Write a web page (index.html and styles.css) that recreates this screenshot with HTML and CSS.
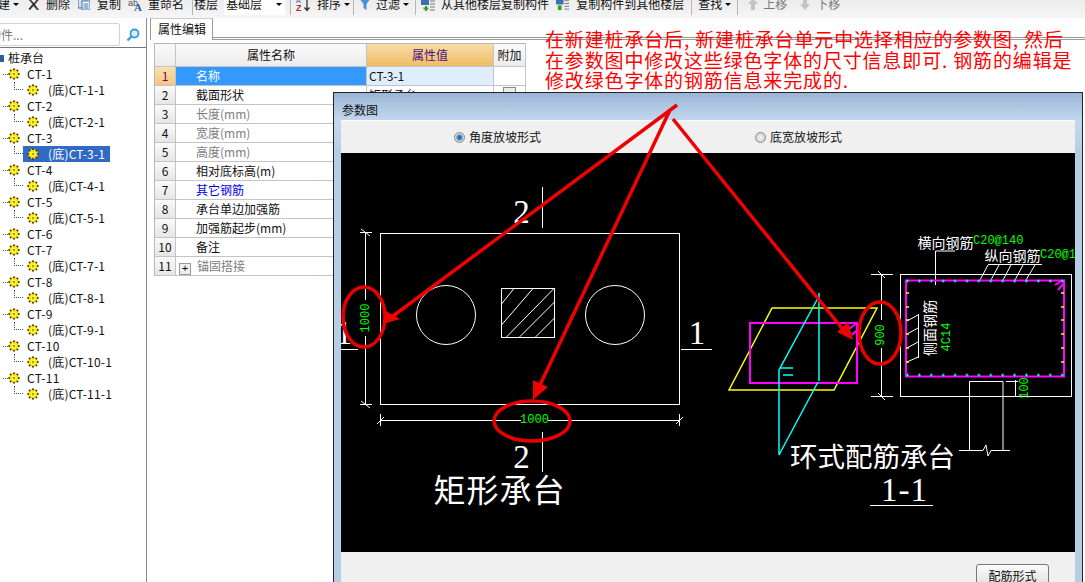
FILE: index.html
```html
<!DOCTYPE html>
<html lang="zh-CN">
<head>
<meta charset="utf-8">
<title>属性编辑</title>
<link rel="stylesheet" href="styles.css">
</head>
<body>
<svg class="defs" width="0" height="0" aria-hidden="true">
  <symbol id="sun" viewBox="0 0 12 12">
    <circle cx="6" cy="6" r="5" fill="#ffe600"/>
    <g fill="#3a3a20">
      <circle cx="6" cy="1.2" r="1"/><circle cx="6" cy="10.8" r="1"/><circle cx="1.2" cy="6" r="1"/><circle cx="10.8" cy="6" r="1"/>
      <circle cx="2.6" cy="2.6" r="1"/><circle cx="9.4" cy="2.6" r="1"/><circle cx="2.6" cy="9.4" r="1"/><circle cx="9.4" cy="9.4" r="1"/>
    </g>
    <circle cx="6" cy="6" r="2.6" fill="#fff34d"/>
    <circle cx="6" cy="6" r="1" fill="#8a7a20"/>
  </symbol>
</svg>

<header class="toolbar">
  <div class="toolrow">
    <span class="tool first">建<i class="caret"></i></span>
    <span class="tool ml9 g6"><svg class="ic12" viewBox="0 0 12 12"><path d="M1 0l5 5 4-5 1.500 1L7 6.500 11 12 9 12 5.500 8 2 12 .5 11 4.500 6 0 1z" fill="#333"/></svg>删除</span>
    <span class="tool ml8 g7"><svg class="ic12" viewBox="0 0 12 12"><rect x="0" y="0" width="8" height="10" fill="#cfe0f5" stroke="#3d6fa8"/><rect x="4" y="3" width="8" height="9" fill="#fff" stroke="#3d6fa8"/><path d="M5.500 6h5M5.500 8h5M5.500 10h5" stroke="#3d6fa8"/></svg>复制</span>
    <span class="tool ml7 g5"><svg class="ic15" viewBox="0 0 15 15"><text x="0" y="9" class="ic-ab">ab</text><text x="6" y="14" class="ic-a">A</text></svg>重命名</span>
    <i class="sep ml8"></i>
    <span class="tool ml1">楼层</span>
    <span class="select ml6">基础层<i class="caret"></i></span>
    <i class="sep ml5"></i>
    <span class="tool ml5 g6"><svg class="ic15" viewBox="0 0 15 15"><text x="0" y="6" class="ic-s">A</text><text x="0" y="14" class="ic-z">Z</text><path d="M11 1v12M8.500 10.500L11 13.500l2.500-3" stroke="#333" fill="none" stroke-width="1.300"/></svg>排序<i class="caret"></i></span>
    <i class="sep ml3"></i>
    <span class="tool ml5 g5"><svg class="ic12" viewBox="0 0 12 12"><path d="M0 0h12L7.500 6v6L4.500 10V6z" fill="#4a90d9"/></svg>过滤<i class="caret"></i></span>
    <i class="sep ml6"></i>
    <span class="tool ml5 g5"><svg class="ic15" viewBox="0 0 15 15"><rect x="0" y="0" width="8" height="8" fill="#3d6fa8"/><path d="M9 1h5M9 4h5M9 7h5M9 10h5M9 13h5" stroke="#777"/><path d="M5 9v5M2.500 11.500h5" stroke="#2da52d" stroke-width="2"/></svg>从其他楼层复制构件</span>
    <span class="tool ml7 g6"><svg class="ic14" viewBox="0 0 15 15"><rect x="0" y="0" width="8" height="8" fill="#3d6fa8"/><path d="M9 1h5M9 4h5M9 7h5M9 10h5M9 13h5" stroke="#777"/><path d="M2 9h4v5H2z" fill="#2da52d"/></svg>复制构件到其他楼层</span>
    <i class="sep ml7"></i>
    <span class="tool ml6 g5">查找<i class="caret"></i></span>
    <i class="sep ml6"></i>
    <span class="tool ml9 g4 dim"><svg class="ic12" viewBox="0 0 12 12"><path d="M6 0l5 6H8v6H4V6H1z" fill="#c4c4c4"/></svg>上移</span>
    <span class="tool ml12 g5 dim"><svg class="ic12" viewBox="0 0 12 12"><path d="M6 12l5-6H8V0H4v6H1z" fill="#c4c4c4"/></svg>下移</span>
  </div>
</header>

<main class="workspace">
  <aside class="sidebar">
    <div class="search">
      <div class="search-box">构件...</div>
      <svg class="search-ic" viewBox="0 0 14 14"><circle cx="8.500" cy="5.500" r="4" fill="#d9effb" stroke="#3a9bd8" stroke-width="1.800"/><path d="M5.500 8.500L1.500 12.500" stroke="#3a9bd8" stroke-width="2.400"/></svg>
    </div>
    <ul class="tree">
      <li class="row root"><i class="cube"></i><span>桩承台</span></li>
      <li class="row p"><i class="dot"></i><svg class="sun"><use href="#sun"/></svg><span>CT-1</span></li>
      <li class="row c"><i class="elbow"></i><span class="node"><svg class="sun"><use href="#sun"/></svg><span>(底)CT-1-1</span></span></li>
      <li class="row p"><i class="dot"></i><svg class="sun"><use href="#sun"/></svg><span>CT-2</span></li>
      <li class="row c"><i class="elbow"></i><span class="node"><svg class="sun"><use href="#sun"/></svg><span>(底)CT-2-1</span></span></li>
      <li class="row p"><i class="dot"></i><svg class="sun"><use href="#sun"/></svg><span>CT-3</span></li>
      <li class="row c"><i class="elbow"></i><span class="node selected"><svg class="sun"><use href="#sun"/></svg><span>(底)CT-3-1</span></span></li>
      <li class="row p"><i class="dot"></i><svg class="sun"><use href="#sun"/></svg><span>CT-4</span></li>
      <li class="row c"><i class="elbow"></i><span class="node"><svg class="sun"><use href="#sun"/></svg><span>(底)CT-4-1</span></span></li>
      <li class="row p"><i class="dot"></i><svg class="sun"><use href="#sun"/></svg><span>CT-5</span></li>
      <li class="row c"><i class="elbow"></i><span class="node"><svg class="sun"><use href="#sun"/></svg><span>(底)CT-5-1</span></span></li>
      <li class="row p"><i class="dot"></i><svg class="sun"><use href="#sun"/></svg><span>CT-6</span></li>
      <li class="row p"><i class="dot"></i><svg class="sun"><use href="#sun"/></svg><span>CT-7</span></li>
      <li class="row c"><i class="elbow"></i><span class="node"><svg class="sun"><use href="#sun"/></svg><span>(底)CT-7-1</span></span></li>
      <li class="row p"><i class="dot"></i><svg class="sun"><use href="#sun"/></svg><span>CT-8</span></li>
      <li class="row c"><i class="elbow"></i><span class="node"><svg class="sun"><use href="#sun"/></svg><span>(底)CT-8-1</span></span></li>
      <li class="row p"><i class="dot"></i><svg class="sun"><use href="#sun"/></svg><span>CT-9</span></li>
      <li class="row c"><i class="elbow"></i><span class="node"><svg class="sun"><use href="#sun"/></svg><span>(底)CT-9-1</span></span></li>
      <li class="row p"><i class="dot"></i><svg class="sun"><use href="#sun"/></svg><span>CT-10</span></li>
      <li class="row c"><i class="elbow"></i><span class="node"><svg class="sun"><use href="#sun"/></svg><span>(底)CT-10-1</span></span></li>
      <li class="row p"><i class="dot"></i><svg class="sun"><use href="#sun"/></svg><span>CT-11</span></li>
      <li class="row c"><i class="elbow"></i><span class="node"><svg class="sun"><use href="#sun"/></svg><span>(底)CT-11-1</span></span></li>
    </ul>
  </aside>

  <section class="editor">
    <div class="tabs"><span class="tab">属性编辑</span></div>
    <div class="grid-wrap">
      <table class="props">
        <colgroup><col class="c-n"><col class="c-name"><col class="c-val"><col class="c-add"></colgroup>
        <thead><tr><th class="num"></th><th>属性名称</th><th class="val-h">属性值</th><th>附加</th></tr></thead>
        <tbody>
          <tr><td class="num cur">1</td><td class="name on">名称</td><td class="val on-val">CT-3-1</td><td></td></tr>
          <tr><td class="num">2</td><td class="name">截面形状</td><td class="val">矩形承台</td><td class="chk"><i class="box"></i></td></tr>
          <tr><td class="num">3</td><td class="name gray">长度(mm)</td><td></td><td></td></tr>
          <tr><td class="num">4</td><td class="name gray">宽度(mm)</td><td></td><td></td></tr>
          <tr><td class="num">5</td><td class="name gray">高度(mm)</td><td></td><td></td></tr>
          <tr><td class="num">6</td><td class="name">相对底标高(m)</td><td></td><td></td></tr>
          <tr><td class="num">7</td><td class="name blue">其它钢筋</td><td></td><td></td></tr>
          <tr><td class="num">8</td><td class="name">承台单边加强筋</td><td></td><td></td></tr>
          <tr><td class="num">9</td><td class="name">加强筋起步(mm)</td><td></td><td></td></tr>
          <tr><td class="num">10</td><td class="name">备注</td><td></td><td></td></tr>
          <tr><td class="num">11</td><td class="name gray expand"><i class="plus">+</i>锚固搭接</td><td></td><td></td></tr>
        </tbody>
      </table>
    </div>
  </section>
</main>

<div class="dialog">
  <div class="dlg-title">参数图</div>
  <div class="dlg-body">
    <div class="dlg-options">
      <label class="radio-a"><i class="radio on"></i>角度放坡形式</label>
      <label class="radio-b"><i class="radio"></i>底宽放坡形式</label>
    </div>
    <svg class="drawing" viewBox="341 153 734 399">
      <g class="w" fill="none">
        <rect x="380.500" y="233.500" width="299" height="171"/>
        <circle cx="446" cy="315" r="29.500"/>
        <circle cx="615" cy="315" r="29.500"/>
        <rect x="501.500" y="288.500" width="53" height="49"/>
        <path d="M501.500 304L514 288.500M501.500 325L533 288.500M506 337.500L554 288.500M519 337.500L554.500 302M535 337.500L554.500 318"/>
        <path d="M365.500 232V405M360 232.500H372M360 404.500H372M361 229l9 7M361 401l9 7"/>
        <path d="M380 420.500H680M380.500 414V426M679.500 414V426M377 424l7-7M676 424l7-7"/>
        <path d="M542.500 187V228M542.500 432V472M341 349.500H358M681 349.500H712"/>
        <rect x="900.500" y="274.500" width="171" height="122"/>
        <path d="M881.500 274V396M871 274.500H893M871 396.500H893M878 271l7 7M878 393l7 7"/>
        <path d="M935.500 285V251H955M988 264.500H1042M988 265l-8 15M999 265l-8 15M1011 265l-8 15M1023 265l-8 15M1035 265l-9 15"/>
        <path d="M918.500 314V358M907 321l11-6M907 334l11-6M907 348l11-6M907 362l11-5"/>
        <path d="M969.500 450V381.500H1003V450M959 450.500H983L986 445L988 456L991 450.500H1010"/>
        <path d="M1015.500 380V397M1006 381.500H1018"/>
        <path d="M870 505.500H933"/>
      </g>
      <rect x="521" y="414" width="27" height="12" fill="#000"/>
      <rect x="359" y="300" width="13" height="36" fill="#000"/>
      <rect x="875" y="320" width="13" height="28" fill="#000"/>
      <text class="g mono" x="534.500" y="420">1000</text>
      <text class="g mono" transform="rotate(-90 366 318)" x="366" y="318">1000</text>
      <text class="g mono" transform="rotate(-90 881 335)" x="881" y="335">900</text>
      <text class="g mono" transform="rotate(-90 947 337)" x="947" y="337">4C14</text>
      <text class="g mono" transform="rotate(-90 1025 388)" x="1025" y="388">100</text>
      <text class="g mono start" x="973" y="241">C20@140</text>
      <text class="g mono start" x="1040" y="255">C20@140</text>
      <text class="t digit" x="521.500" y="212">2</text>
      <text class="t digit" x="521.500" y="457">2</text>
      <text class="t digit" x="344" y="333">1</text>
      <text class="t digit" x="697" y="333">1</text>
      <text class="t digit sec" x="904.500" y="490">1-1</text>
      <text class="t big" x="499.500" y="488">矩形承台</text>
      <text class="t big2" x="872.500" y="455">环式配筋承台</text>
      <text class="t small" x="945.500" y="242">横向钢筋</text>
      <text class="t small" x="1012.500" y="255">纵向钢筋</text>
      <text class="t small" transform="rotate(-90 929 328)" x="929" y="328">侧面钢筋</text>
      <path d="M772 308H877L834 390H729Z" fill="none" stroke="#ff0" stroke-width="1.500"/>
      <rect x="750" y="323" width="107" height="60" fill="none" stroke="#f0f" stroke-width="2"/>
      <path d="M849 329l8-6M852 335l5-5" stroke="#f0f" stroke-width="2" fill="none"/>
      <path d="M819 293V381M818 298L779 370V455L818 382M780 368H793M783 375H793" stroke="#0ff" stroke-width="1.500" fill="none"/>
      <rect x="906" y="280.500" width="158" height="96" fill="none" stroke="#f0f" stroke-width="2"/>
      <path d="M1055 285l8-5M1058 290l6-7" stroke="#f0f" stroke-width="2" fill="none"/>
      <g class="rebar-c">
        <line x1="906" y1="281" x2="1064" y2="281"/>
        <line x1="906" y1="375" x2="1064" y2="375"/>
      </g>
      <g class="rebar-c thick">
        <line x1="907" y1="281" x2="1064" y2="281"/>
        <line x1="907" y1="375" x2="1064" y2="375"/>
      </g>
      <g class="rebar-y">
        <line x1="906" y1="293" x2="909" y2="293"/><line x1="906" y1="307" x2="909" y2="307"/><line x1="906" y1="320" x2="909" y2="320"/><line x1="906" y1="334" x2="909" y2="334"/><line x1="906" y1="348" x2="909" y2="348"/><line x1="906" y1="362" x2="909" y2="362"/>
        <line x1="1061" y1="293" x2="1064" y2="293"/><line x1="1061" y1="307" x2="1064" y2="307"/><line x1="1061" y1="320" x2="1064" y2="320"/><line x1="1061" y1="334" x2="1064" y2="334"/><line x1="1061" y1="348" x2="1064" y2="348"/><line x1="1061" y1="362" x2="1064" y2="362"/>
      </g>
    </svg>
    <div class="dlg-footer"><span class="btn">配筋形式</span></div>
  </div>
</div>

<svg class="markup" viewBox="0 0 1085 582">
  <g fill="none" stroke="#e80000" stroke-width="3.500">
    <ellipse cx="364" cy="317" rx="21" ry="30"/>
    <ellipse cx="532" cy="421" rx="38" ry="20"/>
    <ellipse cx="880" cy="333" rx="21" ry="31"/>
  </g>
  <path d="M677 105L393 316M670 110L540 385M673 119L845 332" fill="none" stroke="#f00000" stroke-width="3.500"/>
  <g fill="#f00000">
    <path d="M383 324L386 311L400 319Z"/>
    <path d="M533 400L533 380L548 387Z"/>
    <path d="M853 340L837 332L848 322Z"/>
  </g>
</svg>

<p class="note"><span>在新建桩承台后, 新建桩承台单元中选择相应的参数图, 然后</span><span>在参数图中修改这些绿色字体的尺寸信息即可. 钢筋的编辑是</span><span>修改绿色字体的钢筋信息来完成的.</span></p>
</body>
</html>
```
FILE: styles.css
```css
* { box-sizing: border-box; }
html, body { margin: 0; padding: 0; }
body {
  position: relative;
  width: 1085px;
  height: 582px;
  overflow: hidden;
  background: #fff;
  color: #111;
  font: 12px/16px "Noto Sans CJK SC", "Liberation Sans", sans-serif;
}
i { font-style: normal; }
.defs { position: absolute; }

/* toolbar */
.toolbar {
  height: 18px;
  overflow: hidden;
  background: linear-gradient(#ececec, #f6f6f6);
}
.toolrow {
  display: flex;
  align-items: center;
  height: 16px;
  margin-top: -4px;
  white-space: nowrap;
}
.tool { display: inline-flex; align-items: center; flex: none; }
.tool.first { margin-left: -2px; }
.tool.dim { color: #777; }
.g4 svg { margin-right: 4px; }
.g5 svg { margin-right: 5px; }
.g6 svg { margin-right: 6px; }
.g7 svg { margin-right: 7px; }
.ml1 { margin-left: 1px; }
.ml3 { margin-left: 3px; }
.ml5 { margin-left: 5px; }
.ml6 { margin-left: 6px; }
.ml7 { margin-left: 7px; }
.ml8 { margin-left: 8px; }
.ml9 { margin-left: 9px; }
.ml12 { margin-left: 12px; }
.ic12 { width: 12px; height: 12px; flex: none; }
.ic14 { width: 14px; height: 14px; flex: none; }
.ic15 { width: 15px; height: 15px; flex: none; }
.ic-ab { font: 9px "Liberation Sans", sans-serif; fill: #555; }
.ic-a { font: bold 11px "Liberation Serif", serif; fill: #2a5d9f; }
.ic-s { font: 7px "Liberation Sans", sans-serif; fill: #2a5d9f; }
.ic-z { font: bold 9px "Liberation Sans", sans-serif; fill: #a33; }
.caret {
  flex: none;
  width: 0;
  height: 0;
  margin-left: 3px;
  border: 3px solid transparent;
  border-top: 3px solid #000;
  border-bottom: 0;
}
.sep { flex: none; width: 1px; height: 22px; background: #b8b8b8; }
.select {
  display: flex;
  align-items: center;
  justify-content: space-between;
  flex: none;
  width: 61px;
  height: 22px;
  padding: 0 3px 0 2px;
  background: #fff;
}

/* workspace */
.workspace { display: flex; height: 564px; }
.sidebar {
  flex: none;
  width: 147px;
  margin-right: 3px;
  border-right: 1px solid #8c8c8c;
}
.search {
  display: flex;
  align-items: center;
  height: 30px;
  padding-top: 5px;
  border-bottom: 1px solid #777;
}
.search-box {
  flex: none;
  width: 120px;
  height: 23px;
  margin-bottom: 1px;
  padding-top: 3px;
  border: 1px solid #d4d4d4;
  border-left: 0;
  border-radius: 0 3px 3px 0;
  color: #777;
  text-indent: -11px;
  overflow: hidden;
}
.search-ic { flex: none; width: 14px; height: 14px; margin-left: 6px; }
.tree { list-style: none; margin: 2px 0 0; padding: 0; }
.row { display: flex; align-items: center; height: 16px; }
.root { padding-left: 8px; }
.cube {
  width: 4px;
  height: 7px;
  margin: 0 4px 0 -8px;
  background: #2d5f9e;
}
.dot {
  flex: none;
  width: 5px;
  margin: 0 0 0 3px;
  border-top: 1px dotted #555;
}
.p .sun { margin-right: 7px; }
.sun { flex: none; width: 12px; height: 12px; }
.p span { letter-spacing: .3px; }
.elbow {
  flex: none;
  align-self: flex-start;
  width: 9px;
  height: 8px;
  margin-left: 14px;
  border-left: 1px dotted #555;
  border-bottom: 1px dotted #555;
}
.node {
  display: flex;
  align-items: center;
  height: 16px;
  padding: 0 5px 0 4px;
}
.node .sun { margin-right: 9px; }
.node > span { letter-spacing: .2px; }
.node.selected { background: #316ac5; color: #fff; }

/* editor */
.editor { flex: 1; display: flex; flex-direction: column; }
.tabs {
  flex: none;
  height: 22px;
  border-bottom: 3px double #9a9a9a;
}
.tab {
  display: block;
  width: 63px;
  height: 22px;
  padding: 2px 0 0 7px;
  background: #fff;
  border: 1px solid #9a9a9a;
  border-bottom: 0;
  border-top-color: #ccc;
}
.grid-wrap {
  flex: 1;
  margin-left: 4px;
  padding-top: 3px;
}
.props {
  table-layout: fixed;
  width: 371px;
  border-collapse: separate;
  border-spacing: 0;
  border-top: 1px solid #b8b8b8;
  border-left: 1px solid #b8b8b8;
  box-shadow: -1px 0 0 #fff;
}
.c-n { width: 21px; }
.c-name { width: 191px; }
.c-val { width: 127px; }
.c-add { width: 32px; }
.props th, .props td {
  height: 19px;
  padding: 0;
  border-right: 1px solid #c4c4c4;
  border-bottom: 1px solid #c4c4c4;
  white-space: nowrap;
  overflow: hidden;
}
.props th {
  height: 23px;
  font-weight: 400;
  background: linear-gradient(#fafafa, #ececec);
  text-align: center;
}
.props th.val-h {
  color: #4b0f82;
  background: linear-gradient(#f8dca8, #f0bc64);
}
.props td.num {
  background: linear-gradient(#fafafa, #e6e6e6);
  text-align: center;
}
.props td.cur {
  color: #5a0f6e;
  background: linear-gradient(#fbe0ad, #f6c67c);
}
.name { padding-left: 20px !important; }
.val { padding-left: 2px !important; }
.on { background: #3399ff; color: #fff; }
.on-val { background: #deeeff; }
.gray { color: #7d7d7d; }
.blue { color: #0000f0; }
.expand { padding-left: 3px !important; }
.plus {
  display: inline-block;
  width: 12px;
  height: 12px;
  margin-right: 6px;
  border: 1px solid #999;
  color: #000;
  background: #eee;
  font: 11px/10px "Liberation Mono", monospace;
  text-align: center;
  vertical-align: -1px;
}
.chk { text-align: center; }
.box { display: inline-block; width: 13px; height: 13px; border: 1px solid #888; background: #eee; }

/* parameter dialog */
.dialog {
  position: absolute;
  left: 333px;
  top: 92px;
  width: 750px;
  height: 500px;
  display: flex;
  flex-direction: column;
  padding: 0 7px;
  border: 1px solid #222;
  background: linear-gradient(#9bb6d6 0, #c3d8ee 28px, #b6cde6 60px);
}
.dlg-title { flex: none; height: 27px; margin-left: 1px; padding-top: 9px; }
.dlg-body {
  flex: 1;
  display: flex;
  flex-direction: column;
  background: #f0f0f0;
}
.dlg-options {
  position: relative;
  flex: none;
  display: flex;
  height: 33px;
  align-items: center;
  padding-left: 113px;
  border-top: 1px solid #fafafa;
}
.radio-a { width: 301px; display: flex; align-items: center; }
.radio-b { display: flex; align-items: center; }
.radio {
  flex: none;
  width: 11px;
  height: 11px;
  margin-right: 4px;
  border-radius: 50%;
  border: 1px solid #8a8a8a;
  background: radial-gradient(#f4f4f4, #c8c8c8);
}
.radio.on { background: radial-gradient(#0d5fb0 0, #3c8ad0 35%, #d8d8d8 60%); }
.drawing { display: block; flex: none; width: 734px; height: 399px; background: #000; }
.w { stroke: #fff; stroke-width: 1; }
.drawing text { text-anchor: middle; dominant-baseline: central; }
.g { fill: #0f0; }
.mono { font: 12px "Liberation Mono", monospace; }
.drawing .start { text-anchor: start; }
.t { fill: #fff; }
.digit { font: 33px "Liberation Serif", serif; }
.sec { letter-spacing: 1px; }
.big { font: 32px "Noto Sans CJK SC", sans-serif; letter-spacing: 1px; }
.big2 { font: 27.500px "Noto Sans CJK SC", sans-serif; }
.small { font: 14px "Noto Sans CJK SC", sans-serif; }
.rebar-c line { stroke: #0ff; stroke-width: 1; stroke-dasharray: 3 8.900; }
.rebar-c.thick line { stroke-width: 3; stroke-dasharray: 1 10.900; }
.rebar-y line { stroke: #ff0; stroke-width: 1.500; }
.dlg-footer {
  flex: 1;
  display: flex;
  justify-content: flex-end;
  padding: 12px 26px 0 0;
  border-left: 1px solid #f0f0f0;
}
.btn {
  width: 73px;
  height: 26px;
  padding-top: 3px;
  border: 1px solid #777;
  border-radius: 3px;
  background: linear-gradient(#fbfbfb, #dcdcdc);
  text-align: center;
}

/* red review markup */
.markup { position: absolute; left: 0; top: 0; width: 1085px; height: 582px; pointer-events: none; }
.note {
  position: absolute;
  left: 545px;
  top: 29px;
  margin: 0;
  color: #f00;
  font-size: 19px;
  letter-spacing: .85px;
  line-height: 20.500px;
  white-space: nowrap;
}
.note span { display: block; }
```
